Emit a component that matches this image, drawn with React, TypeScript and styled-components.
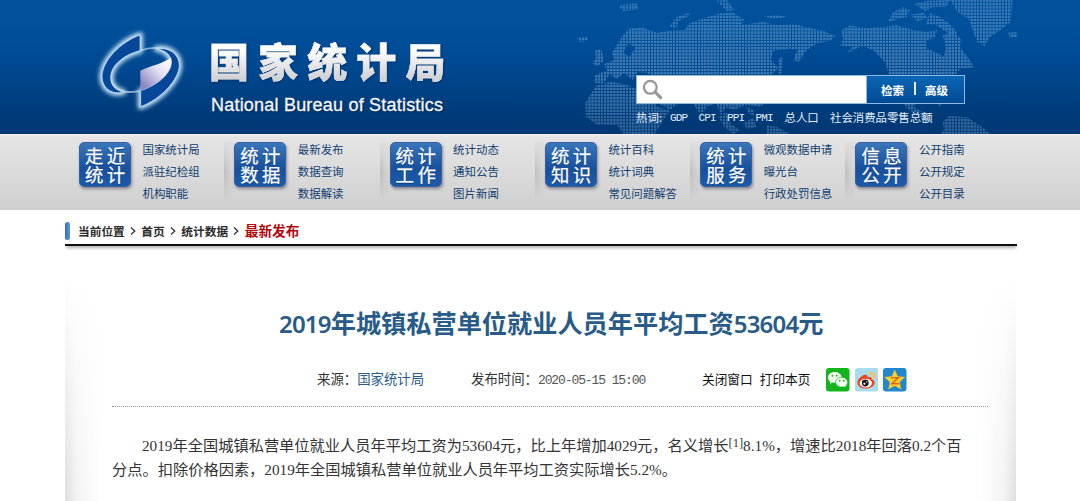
import React from "react";
import styled, { createGlobalStyle } from "styled-components";

const Global = createGlobalStyle`
  * { box-sizing: border-box; }
  body {
    margin: 0;
    background: #fff;
    color: #333;
    font-family: "Liberation Sans", "Noto Sans CJK SC", sans-serif;
  }
`;

const Page = styled.div`
  width: 1080px;
  height: 501px;
  overflow: hidden;
  background: #fff;
  white-space: nowrap;
`;

const Header = styled.header`
  position: relative;
  display: flex;
  justify-content: space-between;
  height: 134px;
  padding: 0 115px 0 93px;
  background: linear-gradient(#00509c 0, #00509c 20%, #004890 50%, #003a78 88%, #003874);
`;

const MapArt = styled.svg`
  position: absolute;
  left: 560px;
  top: 0;
  width: 520px;
  height: 134px;
`;

const Brand = styled.div`
  display: flex;
  align-items: flex-start;
`;

const Emblem = styled.svg`
  width: 110px;
  height: 95px;
  margin: 25px 0 0 -3px;
  overflow: visible;
`;

const Names = styled.div`
  padding: 34px 0 0 9px;
`;

const ChineseName = styled.h1`
  margin: 0;
  font: 900 40px/52px "Noto Sans CJK SC", sans-serif;
  letter-spacing: 9.1px;
  color: transparent;
  background: linear-gradient(#fff 30%, #d2d2d6 85%);
  background-clip: text;
  -webkit-text-stroke: 0.4px #eeeef0;
  filter: drop-shadow(1px 1px 1px rgba(0, 20, 60, 0.4));
`;

const EnglishName = styled.div`
  margin: 9px 0 0 2px;
  font: 18px/20px "Liberation Sans", sans-serif;
  letter-spacing: 0.21px;
  color: #f4f6fa;
  -webkit-text-stroke: 0.3px #f4f6fa;
  text-shadow: 1px 1px 2px rgba(0, 20, 60, 0.7);
`;

const SearchArea = styled.div`
  position: relative;
  width: 329px;
  padding-top: 75px;
`;

const SearchBar = styled.div`
  display: flex;
  height: 29px;
  border: 1px solid #8fb9e0;
  background: #fff;
`;

const SearchField = styled.div`
  width: 229px;
  padding: 3px 0 0 5px;
`;

const SearchActions = styled.div`
  flex: 1;
  display: flex;
  align-items: center;
  padding: 1px 0 0 14px;
  border-left: 1px solid #8fb9e0;
  background: linear-gradient(#0a66b4, #014a96);
  color: #fff;
  font: bold 11.5px/20px "Noto Sans CJK SC", sans-serif;
`;

const ActionRule = styled.i`
  width: 2px;
  height: 13px;
  margin: -3px 9px 0 10px;
  background: #e4effa;
`;

const HotWords = styled.div`
  display: flex;
  margin-top: 3px;
  color: #e6eef8;
  font: 11.4px/20px "Noto Sans CJK SC", sans-serif;
`;

const Hot = styled.span<{ $w: number; $latin?: boolean }>`
  width: ${(p) => p.$w}px;
  ${(p) =>
    p.$latin &&
    `padding-top: 1px; font-family: "Liberation Mono", monospace; font-size: 11px; letter-spacing: -0.85px;`}
`;

const Nav = styled.nav`
  display: flex;
  height: 76px;
  padding-left: 69px;
  background: linear-gradient(#f0f0f0 0, #e4e4e4 4%, #dedede 35%, #cfcfcf);
`;

const NavGroup = styled.div<{ $first: boolean }>`
  display: flex;
  width: 155.3px;
  padding: 8px 0 0 10px;
  background: ${(p) =>
    p.$first
      ? "none"
      : `linear-gradient(rgba(222,222,222,1), rgba(222,222,222,0) 50%, rgba(210,210,210,1)) 0 8px / 10px 58px no-repeat,
         linear-gradient(90deg, rgba(110,110,110,.26), transparent) 0 8px / 10px 58px no-repeat`};
`;

const NavTile = styled.div`
  width: 52px;
  height: 45px;
  padding: 3px 0 0 5px;
  border: 1px solid #3b5c9d;
  border-radius: 5px;
  background: linear-gradient(#3976bb, #17509c 60%, #1c5baa);
  box-shadow: 1px 2px 3px rgba(60, 60, 80, 0.5);
  color: #fff;
  font: 400 18.4px/18.6px "Noto Sans CJK SC", sans-serif;
  -webkit-text-stroke: 0.25px #fff;
  letter-spacing: 3.4px;
  white-space: pre-line;
  text-shadow: 0 1px 1px #0a3978;
`;

const NavLinks = styled.div`
  margin: -4px 0 0 11.5px;
  color: #123f70;
  font: 11.45px/22px "Noto Sans CJK SC", sans-serif;
`;

const Container = styled.main`
  width: 952px;
  margin-left: 65px;
`;

const Crumbs = styled.div`
  display: flex;
  align-items: center;
  height: 36px;
  padding-top: 7px;
  border-bottom: 2px solid #111;
  box-shadow: 0 3px 3px -1px rgba(0, 0, 0, 0.3);
  clip-path: inset(0 0 -8px 0);
  font: bold 11.7px/20px "Noto Sans CJK SC", sans-serif;
  color: #2b2b2b;
`;

const CrumbMark = styled.i`
  width: 5px;
  height: 18px;
  margin-right: 8px;
  border-radius: 3px;
  background: linear-gradient(90deg, #2f6fb8, #5b9ad8);
`;

const CrumbArrow = styled.svg`
  width: 6px;
  height: 8px;
  margin: 0 5.3px;
`;

const CrumbCurrent = styled.span`
  margin-top: -1px;
  color: #b3040c;
  font-size: 13.7px;
`;

const Article = styled.article`
  width: 951px;
  height: 255px;
  padding: 60px 28px 0 47px;
  background:
    linear-gradient(#fff 14%, rgba(255, 255, 255, 0) 100%),
    linear-gradient(90deg, #dedede, #f3f3f3 12px, #fff 36px, #fff 915px, #f3f3f3 939px, #dedede);
`;

const Title = styled.h2`
  margin: 0 0 0 167px;
  font: bold 25.2px/32px "Noto Sans CJK SC", sans-serif;
  color: #285b88;
`;

const TitleDigits = styled.span`
  font-family: "Noto Sans", sans-serif;
  font-size: 24px;
  font-weight: 600;
  letter-spacing: -0.8px;
`;

const Meta = styled.div`
  display: flex;
  align-items: center;
  height: 67px;
  padding: 11px 0 0 205px;
  border-bottom: 1px dotted #999;
  font: 13.4px/22px "Noto Sans CJK SC", sans-serif;
`;

const MetaCell = styled.div<{ $w: number }>`
  width: ${(p) => p.$w}px;
  height: 22px;
  margin-top: -2px;
`;

const SourceLink = styled.span`
  color: #285b88;
`;

const Stamp = styled.span`
  color: #555;
  font-family: "Liberation Mono", monospace;
  font-size: 13px;
  line-height: 1;
  letter-spacing: -1.1px;
`;

const Tools = styled.div`
  display: flex;
  gap: 7px;
  width: 124px;
  color: #111;
  font-size: 12.7px;
`;

const Shares = styled.div`
  display: flex;
  gap: 5px;
  margin-top: 3px;
`;

const ShareIcon = styled.svg`
  width: 23.5px;
  height: 23.5px;
`;

const Body = styled.p`
  margin: 27px 0 0;
  color: #333;
  font: 15.24px/24px "Liberation Serif", "Noto Sans CJK SC", serif;
`;

const Line = styled.span<{ $indent?: boolean }>`
  display: block;
  height: 24px;
  padding-left: ${(p) => (p.$indent ? 30 : 0)}px;
`;

const Note = styled.sup`
  font-size: 12.5px;
  line-height: 0;
  vertical-align: 4px;
`;

const groups: { tile: string; links: string[] }[] = [
  { tile: "走近\n统计", links: ["国家统计局", "派驻纪检组", "机构职能"] },
  { tile: "统计\n数据", links: ["最新发布", "数据查询", "数据解读"] },
  { tile: "统计\n工作", links: ["统计动态", "通知公告", "图片新闻"] },
  { tile: "统计\n知识", links: ["统计百科", "统计词典", "常见问题解答"] },
  { tile: "统计\n服务", links: ["微观数据申请", "曝光台", "行政处罚信息"] },
  { tile: "信息\n公开", links: ["公开指南", "公开规定", "公开目录"] },
];

const WorldMap = () => (
  <MapArt viewBox="0 0 1560 402">
    <defs>
      <pattern id="dots" width="9.4" height="9.4" patternUnits="userSpaceOnUse">
        <rect width="7" height="7" fill="#6fa3cf" />
      </pattern>
      <linearGradient id="fade" x1="0" y1="0" x2="0" y2="1">
        <stop offset="0" stopColor="#fff" stopOpacity=".48" />
        <stop offset=".5" stopColor="#fff" stopOpacity=".58" />
        <stop offset="1" stopColor="#fff" stopOpacity=".42" />
      </linearGradient>
      <mask id="mapMask">
        <rect width="1560" height="402" fill="url(#fade)" />
      </mask>
    </defs>
    <g fill="url(#dots)" mask="url(#mapMask)">
      {/* Europe and Asia */}
      <path d="M155 160L185 112L205 86L245 82L290 98L330 92L375 90L385 72L430 55L480 40L520 38L552 58L545 74L615 66L645 76L700 72L760 86L790 92L825 108L812 122L775 128L740 150L715 186L700 180L712 150L690 146L640 152L632 180L655 205L632 226L610 250L640 290L600 320L560 315L520 330L500 322L482 345L468 310L440 320L424 348L400 312L360 306L330 330L295 310L268 270L290 240L262 218L232 216L218 240L192 220L170 238L150 222L132 250L105 250L104 226L140 212L132 192L165 180ZM204 130L190 158L208 170L226 142Z" fillRule="evenodd" />
      <path d="M105 152L124 146L132 180L112 200L98 190L108 176ZM50 112L82 110L84 122L58 126ZM175 16L230 10L236 28L190 34ZM330 78L348 52L386 38L390 46L358 62L346 88ZM470 2L500 0L524 30L502 34ZM612 48L650 44L682 50L640 58ZM668 170L664 222L654 218L656 176Z" />
      {/* Africa */}
      <path d="M108 258L150 246L192 252L230 268L266 272L290 320L330 332L310 360L284 402L190 402L172 376L110 374L78 350L76 308Z" />
      {/* South-east Asia and Oceania */}
      <path d="M474 350L500 336L512 372L540 390L520 402L494 382ZM550 370L580 352L590 380L562 388ZM558 320L580 330L584 348L564 340ZM618 376L650 380L690 402L620 402Z" />
      {/* North America */}
      <path d="M842 92L870 76L910 84L960 82L1010 76L1060 90L1100 96L1132 90L1124 112L1098 122L1100 146L1136 160L1150 172L1158 142L1148 106L1180 94L1206 120L1200 142L1234 186L1240 202L1200 206L1180 230L1150 260L1138 286L1142 322L1118 296L1080 296L1060 320L1098 342L1122 366L1110 370L1042 326L1008 276L986 228L978 190L940 150L905 138L860 160L878 142L840 136L850 118Z" />
      <path d="M982 66L1000 36L1030 22L1050 30L1040 50L1012 58ZM1062 12L1100 2L1170 0L1158 20L1118 22L1096 34ZM1050 44L1090 38L1104 54L1072 64ZM1108 40L1136 48L1166 70L1192 98L1172 104L1130 76L1098 72Z" />
      {/* Greenland and Iceland */}
      <path d="M1170 0L1358 0L1352 66L1318 92L1290 110L1274 138L1252 126L1240 96L1226 56L1192 36ZM1344 98L1370 96L1372 110L1350 114Z" />
      {/* South America */}
      <path d="M1148 366L1166 348L1222 352L1270 384L1290 402L1142 402L1152 388Z" />
    </g>
  </MapArt>
);

const Logo = () => (
  <Emblem viewBox="0 0 330 285">
    <defs>
      <filter id="glow" x="-30%" y="-30%" width="160%" height="160%">
        <feGaussianBlur stdDeviation="6" />
      </filter>
      <linearGradient id="fold" x1="0" y1="1" x2="1" y2="0">
        <stop offset=".15" stopColor="#8d8ac4" />
        <stop offset=".6" stopColor="#e6e2f2" />
        <stop offset="1" stopColor="#fff" />
      </linearGradient>
    </defs>
    <g fill="#cbe6f8" stroke="#cbe6f8" strokeWidth="17" strokeLinejoin="round" filter="url(#glow)">
      <path d="M150 30C90 52 36 108 36 156C38 194 70 210 100 201C80 196 62 184 62 158C62 120 104 88 150 77Z" />
      <path d="M200 71C236 66 268 86 268 122C266 166 210 224 152 245L152 197C200 182 244 146 244 112C244 90 226 76 200 71Z" />
    </g>
    <path d="M150 77C180 66 220 64 240 84" fill="none" stroke="#cfe8f8" strokeWidth="5" opacity=".6" />
    <path d="M62 164C70 196 100 206 148 199" fill="none" stroke="#cfe8f8" strokeWidth="6" opacity=".6" />
    <g stroke="#d9edfa" strokeWidth="2" fill="#06479a">
      <path d="M150 30C90 52 36 108 36 156C38 194 70 210 100 201C80 196 62 184 62 158C62 120 104 88 150 77Z" />
      <path d="M200 71C236 66 268 86 268 122C266 166 210 224 152 245L152 197C200 182 244 146 244 112C244 90 226 76 200 71Z" />
    </g>
    <path d="M151 137C180 122 218 116 243 98C252 138 206 180 151 197Z" fill="url(#fold)" />
  </Emblem>
);

const Arrow = () => (
  <CrumbArrow viewBox="0 0 6 8">
    <path d="M1 .6L4.8 4L1 7.4" fill="none" stroke="#333" strokeWidth="1.3" />
  </CrumbArrow>
);

export default function App() {
  return (
    <Page>
      <Global />
      <Header>
        <WorldMap />
        <Brand>
          <Logo />
          <Names>
            <ChineseName>国家统计局</ChineseName>
            <EnglishName>National Bureau of Statistics</EnglishName>
          </Names>
        </Brand>
        <SearchArea>
          <SearchBar>
            <SearchField>
              <svg width="21" height="21" viewBox="0 0 21 21" fill="none" stroke="#999">
                <circle cx="8.3" cy="8.3" r="6.4" strokeWidth="2.3" />
                <path d="M13.2 13.2L18.6 18.6" strokeWidth="3.2" strokeLinecap="round" />
              </svg>
            </SearchField>
            <SearchActions>
              检索
              <ActionRule />
              高级
            </SearchActions>
          </SearchBar>
          <HotWords>
            <Hot $w={34}>热词:</Hot>
            <Hot $w={28.5} $latin>GDP</Hot>
            <Hot $w={28.5} $latin>CPI</Hot>
            <Hot $w={28.5} $latin>PPI</Hot>
            <Hot $w={29} $latin>PMI</Hot>
            <Hot $w={45.5}>总人口</Hot>
            <Hot $w={104}>社会消费品零售总额</Hot>
          </HotWords>
        </SearchArea>
      </Header>
      <Nav>
        {groups.map((g, i) => (
          <NavGroup key={i} $first={i === 0}>
            <NavTile>{g.tile}</NavTile>
            <NavLinks>
              {g.links.map((l) => (
                <div key={l}>{l}</div>
              ))}
            </NavLinks>
          </NavGroup>
        ))}
      </Nav>
      <Container>
        <Crumbs>
          <CrumbMark />
          <span>当前位置</span>
          <Arrow />
          <span>首页</span>
          <Arrow />
          <span>统计数据</span>
          <Arrow />
          <CrumbCurrent>最新发布</CrumbCurrent>
        </Crumbs>
        <Article>
          <Title>
            <TitleDigits>2019</TitleDigits>年城镇私营单位就业人员年平均工资<TitleDigits>53604</TitleDigits>元
          </Title>
          <Meta>
            <MetaCell $w={154}>
              来源：<SourceLink>国家统计局</SourceLink>
            </MetaCell>
            <MetaCell $w={231}>
              发布时间：<Stamp>2020-05-15 15:00</Stamp>
            </MetaCell>
            <Tools>
              <span>关闭窗口</span>
              <span>打印本页</span>
            </Tools>
            <Shares>
              <ShareIcon viewBox="0 0 24 24">
                <rect width="24" height="24" rx="3" fill="#12b51c" />
                <path d="M9 4C5 4 2 6.500 2 9.700c0 1.800 1 3.300 2.500 4.300L4 16l2.500-1.300c.8.200 1.600.3 2.500.3 4 0 7-2.400 7-5.400S13 4 9 4Z" fill="#f5fff2" />
                <path d="M16 9.500c-3.500 0-6.200 2.200-6.200 5s2.700 5 6.200 5c.8 0 1.500-.1 2.200-.3l2.300 1.200-.5-1.900c1.300-.9 2.200-2.300 2.200-4 0-2.800-2.700-5-6.200-5Z" fill="#f5fff2" stroke="#12b51c" strokeWidth=".8" />
                <g fill="#12b51c">
                  <circle cx="6.600" cy="8" r="1" />
                  <circle cx="11" cy="8" r="1" />
                  <circle cx="14" cy="13" r=".9" />
                  <circle cx="18.200" cy="13" r=".9" />
                </g>
              </ShareIcon>
              <ShareIcon viewBox="0 0 24 24">
                <rect width="24" height="24" rx="3" fill="#a9dbee" />
                <path d="M15 5.500c3-1 5.500 1.500 4.600 4.500" fill="none" stroke="#f0c36c" strokeWidth="3" strokeLinecap="round" />
                <path d="M10 7C6 8 2.500 12 2.500 15c0 4 4.500 6 8.500 6 5 0 9-3 9-6 0-2-1-3-3-3.500.5-2-1-3-4-2C13 7.500 12 6.500 10 7Z" fill="#e4471f" />
                <ellipse cx="11" cy="15.400" rx="6.300" ry="4.400" fill="#fff" />
                <circle cx="10.500" cy="15.300" r="3.500" fill="#191919" />
                <circle cx="9.600" cy="16.100" r="1.100" fill="#fff" />
                <circle cx="12" cy="14.200" r=".7" fill="#fff" />
              </ShareIcon>
              <ShareIcon viewBox="0 0 24 24">
                <rect width="24" height="24" rx="3" fill="#2188cf" />
                <path d="M12 2l3 6.600 7.200.8-5.300 5 1.400 7.100L12 18l-6.300 3.500 1.400-7.100-5.300-5L9 8.600Z" fill="#fad42e" stroke="#f3b61d" strokeWidth=".5" strokeLinejoin="round" />
                <path d="M8 10h7.500l-6.500 6h7.500" fill="none" stroke="#e06a14" strokeWidth="1.700" />
              </ShareIcon>
            </Shares>
          </Meta>
          <Body>
            <Line $indent>
              2019年全国城镇私营单位就业人员年平均工资为53604元，比上年增加4029元，名义增长<Note>[1]</Note>8.1%，增速比2018年回落0.2个百
            </Line>
            <Line>分点。扣除价格因素，2019年全国城镇私营单位就业人员年平均工资实际增长5.2%。</Line>
          </Body>
        </Article>
      </Container>
    </Page>
  );
}
